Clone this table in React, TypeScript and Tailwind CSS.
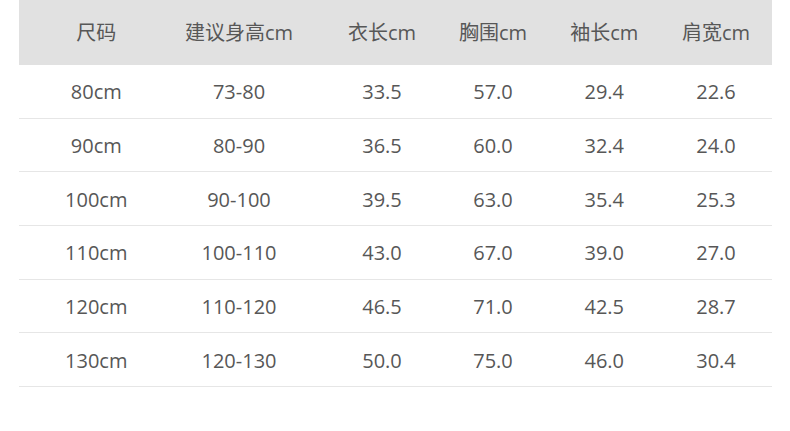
const headers = ['尺码', '建议身高cm', '衣长cm', '胸围cm', '袖长cm', '肩宽cm'];

const rows: string[][] = [
    ['80cm', '73-80', '33.5', '57.0', '29.4', '22.6'],
    ['90cm', '80-90', '36.5', '60.0', '32.4', '24.0'],
    ['100cm', '90-100', '39.5', '63.0', '35.4', '25.3'],
    ['110cm', '100-110', '43.0', '67.0', '39.0', '27.0'],
    ['120cm', '110-120', '46.5', '71.0', '42.5', '28.7'],
    ['130cm', '120-130', '50.0', '75.0', '46.0', '30.4'],
];

// small nudges so each column lands where the picture has it
const cellPad = ['pl-[6px]', '', 'pl-[16px]', '', '', ''];

const SizeChart: React.FC = () => {
    return (
        <div
            className="w-[790px] h-[431px] bg-white text-[20px] text-[#575757]"
            style={{ fontFamily: '"Open Sans", "Noto Sans CJK SC", sans-serif' }}
        >
            <div className="ml-[19px] w-[753px]">
                <div className="grid grid-cols-[148.5px_143px_127px_111px_111.5px_112px] h-[65px] bg-[#e1e1e1] items-center">
                    {headers.map((h, i) => (
                        <div key={h} className={`text-center ${cellPad[i]}`}>
                            {h}
                        </div>
                    ))}
                </div>
                {rows.map((row) => (
                    <div
                        key={row[0]}
                        className="grid grid-cols-[148.5px_143px_127px_111px_111.5px_112px] h-[53.67px] pt-[2px] items-center border-b border-[#e6e6e6]"
                    >
                        {row.map((cell, i) => (
                            <div key={i} className={`text-center ${cellPad[i]}`}>
                                {cell}
                            </div>
                        ))}
                    </div>
                ))}
            </div>
        </div>
    );
};

export default function App() {
    return <SizeChart />;
}
